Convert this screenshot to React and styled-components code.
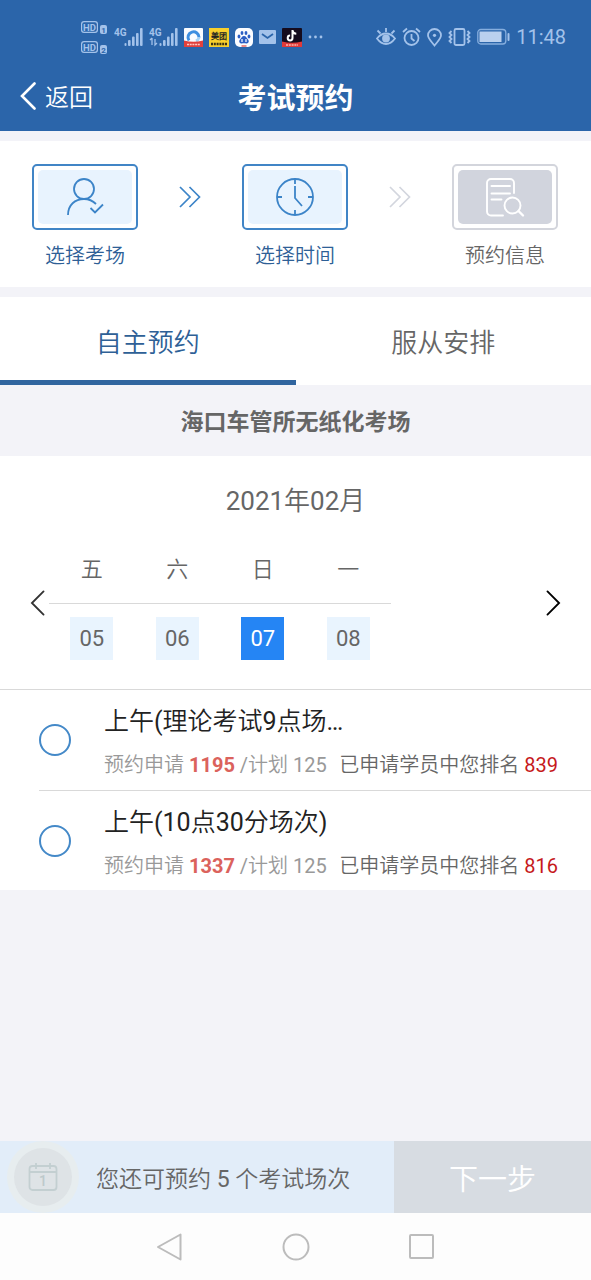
import React, { useState } from 'react';
import styled, { createGlobalStyle } from 'styled-components';

const steps = [
    { id: 1, label: '选择考场', icon: 'person', active: true },
    { id: 2, label: '选择时间', icon: 'clock', active: true },
    { id: 3, label: '预约信息', icon: 'info', active: false },
];

const days = [
    { week: '五', day: '05' },
    { week: '六', day: '06' },
    { week: '日', day: '07' },
    { week: '一', day: '08' },
];

const sessions = [
    { id: 'a', title: '上午(理论考试9点场…', applied: 1195, plan: 125, rank: 839 },
    { id: 'b', title: '上午(10点30分场次)', applied: 1337, plan: 125, rank: 816 },
];

const HdBadge = ({ n }) => (
    <svg width="27" height="13" viewBox="0 0 27 13">
        <rect x="0" y="0" width="17" height="12" rx="3" fill="#a3c2ea" />
        <rect x="1.2" y="1.2" width="14.6" height="9.6" rx="2" fill="#2b65aa" />
        <text x="8.5" y="9.5" fontSize="9.5" fontWeight="700" textAnchor="middle" fill="#a3c2ea">HD</text>
        <rect x="19" y="4" width="7" height="9" rx="2" fill="#a3c2ea" />
        <text x="22.5" y="12" fontSize="8" fontWeight="700" textAnchor="middle" fill="#2b65aa">{ n }</text>
    </svg>
);

const Signal = ({ data }) => (
    <svg width="29" height="22" viewBox="0 0 29 22" fill="#a3c2ea">
        <text x="0" y="10" fontSize="10" fontWeight="700">4G</text>
        { data && <path d="M3 12v7M1 14l2-2M6 13v6l2-2" fill="none" stroke="#a3c2ea" strokeWidth="1.3" /> }
        <rect x="10.5" y="17" width="2" height="3" rx="1" />
        <rect x="14" y="14" width="2.6" height="6" rx="1" />
        <rect x="18" y="10.5" width="2.6" height="9.5" rx="1" />
        <rect x="22" y="7" width="2.6" height="13" rx="1" />
        <rect x="26" y="2" width="2.6" height="18" rx="1" />
    </svg>
);

const BrowserApp = () => (
    <svg width="19" height="19" viewBox="0 0 19 19">
        <rect width="19" height="19" rx="1" fill="#fafcff" />
        <path d="M5 12.5A5.5 5.5 0 1 1 15 9.5" fill="none" stroke="#3f8fe0" strokeWidth="3" />
        <path d="M15 9.5A5 5 0 0 1 12 13" fill="none" stroke="#a9d4f5" strokeWidth="3" />
        <path d="M0 12.5Q9.5 15 19 12.5V19H0z" fill="#e2403c" />
        <path d="M3 16.5h13" stroke="#ffc9c4" strokeWidth="1.6" strokeDasharray="2 .7" />
    </svg>
);

const MeituanApp = () => (
    <svg width="20" height="19" viewBox="0 0 20 19">
        <rect width="20" height="19" fill="#f8cf2c" />
        <text x="10" y="11" fontSize="8" fontWeight="700" textAnchor="middle" fill="#222">美团</text>
        <path d="M2 16h16" stroke="#3a3214" strokeWidth="2.4" strokeDasharray="2 .8" />
    </svg>
);

const BaiduApp = () => (
    <svg width="18" height="19" viewBox="0 0 18 19">
        <rect width="18" height="19" rx="5" fill="#fbfcff" />
        <g fill="#2d5fc4">
            <ellipse cx="4" cy="8.5" rx="1.4" ry="2" />
            <ellipse cx="7" cy="5" rx="1.4" ry="2" />
            <ellipse cx="11" cy="5" rx="1.4" ry="2" />
            <ellipse cx="14" cy="8.5" rx="1.4" ry="2" />
            <path d="M9 8c2.2 0 2.5 2 4 3.4 1.4 1.4.8 3.8-1.3 4-1 .1-1.7-.2-2.7-.2s-1.7.3-2.7.2c-2.1-.2-2.7-2.6-1.3-4C6.5 10 6.8 8 9 8z" />
        </g>
        <path d="M7 11v3M11 11v3" stroke="#fff" strokeWidth="1.2" />
        <path d="M6.5 18h5" stroke="#e2403c" strokeWidth="1.2" />
    </svg>
);

const MailIcon = () => (
    <svg width="17" height="14" viewBox="0 0 17 14">
        <rect width="17" height="14" rx="1" fill="#a3c2ea" />
        <path d="M3 4l5.5 4L14 4" fill="none" stroke="#2b65aa" strokeWidth="1.8" />
    </svg>
);

const TiktokApp = () => (
    <svg width="20" height="19" viewBox="0 0 20 19">
        <rect width="20" height="19" rx="1" fill="#150b1d" />
        <path d="M10.5 2v8a2.4 2.4 0 1 1-2.4-2.4M10.5 2.5c.3 2 1.7 3.1 3.8 3.2" fill="none" stroke="#fff" strokeWidth="2" />
        <path d="M0 13.5Q10 16 20 13.5V19H0z" fill="#df3a3a" />
        <path d="M4 17h12" stroke="#ffb8b0" strokeWidth="1.5" strokeDasharray="2 .8" />
    </svg>
);

const DotsIcon = () => (
    <svg width="15" height="4" viewBox="0 0 15 4" fill="#a3c2ea">
        <circle cx="2" cy="2" r="1.4" />
        <circle cx="7.5" cy="2" r="1.4" />
        <circle cx="13" cy="2" r="1.4" />
    </svg>
);

const EyeIcon = () => (
    <svg width="20" height="20" viewBox="0 0 20 20" fill="none" stroke="#a3c2ea" strokeWidth="1.8">
        <path d="M1 11.5Q5 6.5 10 6.5t9 5Q15 17 10 17t-9-5.5zM10 5V1M4.5 6.5l-3-3M15.5 6.5l3-3" />
        <circle cx="10" cy="11.5" r="3" fill="#a3c2ea" />
    </svg>
);

const AlarmIcon = () => (
    <svg width="19" height="20" viewBox="0 0 19 20" fill="none" stroke="#a3c2ea" strokeWidth="1.8">
        <circle cx="9.5" cy="11" r="7" />
        <path d="M9.5 7v4.5l3 2.5M1 5l4-3.5M18 5l-4-3.5" />
    </svg>
);

const PinIcon = () => (
    <svg width="15" height="19" viewBox="0 0 15 19" fill="none" stroke="#a3c2ea" strokeWidth="1.8">
        <path d="M7.5 17.5C4 13 1 10.5 1 7.3a6.5 6.3 0 0 1 13 0c0 3.2-3 5.7-6.5 10.2z" />
        <circle cx="7.5" cy="7.3" r="1.6" fill="#a3c2ea" stroke="none" />
    </svg>
);

const VibrateIcon = () => (
    <svg width="23" height="20" viewBox="0 0 23 20" fill="none" stroke="#a3c2ea" strokeWidth="1.8">
        <rect x="6.5" y="2" width="10" height="16" rx="1.5" />
        <path d="M3.5 4l-2 2 2 2-2 2 2 2-2 2 2 2M19.5 4l2 2-2 2 2 2-2 2 2 2-2 2" />
    </svg>
);

const BatteryIcon = () => (
    <svg width="33" height="18" viewBox="0 0 33 18">
        <rect x=".8" y="1.5" width="28" height="14.5" rx="3" fill="none" stroke="#86aede" strokeWidth="1.3" />
        <rect x="2.5" y="3.5" width="22" height="10.5" fill="#bad0ee" />
        <rect x="30.5" y="5" width="2" height="8" rx="1" fill="#a3c2ea" />
    </svg>
);

const PersonIcon = () => (
    <svg width="44" height="42" viewBox="0 0 44 42" fill="none" stroke="#3c84c8" strokeWidth="1.8">
        <circle cx="21" cy="13" r="10" />
        <path d="M5 39c0-10 7-16 16-16 5 0 9 2 12 5M27.5 32l4.5 4.5 8-8" />
    </svg>
);

const ClockIcon = () => (
    <svg width="42" height="42" viewBox="0 0 42 42" fill="none" stroke="#3c84c8" strokeWidth="1.8">
        <circle cx="21" cy="21" r="18" />
        <path d="M21 3v5M21 39v-5M3 21h5M39 21h-5M21 10v12l7 8" />
    </svg>
);

const InfoIcon = () => (
    <svg width="42" height="42" viewBox="1 0 42 42" fill="none" stroke="#fff" strokeWidth="1.9" strokeLinecap="round">
        <path d="M20 39.5H8a4 4 0 0 1-4-4V7a4 4 0 0 1 4-4h19a4 4 0 0 1 4 4v10M8.5 10h18.5M8.5 17.5h18.5M8.5 23.5h10" />
        <circle cx="29.5" cy="29.5" r="8" />
        <path d="M35.5 35l4.5 4.5" strokeWidth="2.4" />
    </svg>
);

const DoubleChevron = ({ color }) => (
    <svg width="22" height="22" viewBox="0 0 22 22" fill="none" stroke={ color } strokeWidth="1.7">
        <path d="M1 1l10 10L1 21M10.5 1l10 10-10 10" />
    </svg>
);

const Chevron = ({ left, width, height, stroke }) => (
    <svg width={ width } height={ height } viewBox="0 0 16 28" fill="none" stroke="currentColor" strokeWidth={ stroke } strokeLinecap="round">
        <path d={ left ? 'M14.5 1.5L2 14l12.5 12.5' : 'M1.5 1.5L14 14 1.5 26.5' } />
    </svg>
);

const CalendarIcon = () => (
    <svg width="30" height="30" viewBox="0 0 30 30" fill="none" stroke="#c3cfd1" strokeWidth="1.8">
        <rect x="1.5" y="4" width="27" height="24" rx="3" />
        <path d="M1.5 10h27M8 1v6M22 1v6" />
        <text x="15" y="24" fontSize="14" fontWeight="500" textAnchor="middle" fill="#bdc9cb" stroke="none">1</text>
    </svg>
);

const stepIcons = { person: <PersonIcon />, clock: <ClockIcon />, info: <InfoIcon /> };

const App = () => {
    const [ tab, setTab ] = useState('self');
    const [ day, setDay ] = useState('07');

    return (
        <Page>
            <GlobalStyle />
            <StatusBar>
                <StatusLeft>
                    <HdStack>
                        <HdBadge n="1" />
                        <HdBadge n="2" />
                    </HdStack>
                    <Signal />
                    <Signal data />
                    <BrowserApp />
                    <MeituanApp />
                    <BaiduApp />
                    <MailIcon />
                    <TiktokApp />
                    <DotsIcon />
                </StatusLeft>
                <StatusRight>
                    <EyeIcon />
                    <AlarmIcon />
                    <PinIcon />
                    <VibrateIcon />
                    <BatteryIcon />
                    <Time>11:48</Time>
                </StatusRight>
            </StatusBar>

            <Header>
                <Back>
                    <Chevron left width={ 16 } height={ 28 } stroke={ 2.6 } />
                    返回
                </Back>
                <Title>考试预约</Title>
            </Header>

            <Steps>
                { steps.map((step, i) => (
                    <React.Fragment key={ step.id }>
                        { i > 0 && (
                            <Arrow>
                                <DoubleChevron color={ step.active ? '#3c84c8' : '#d3d6de' } />
                            </Arrow>
                        ) }
                        <Step>
                            <StepBox $active={ step.active }>
                                <StepFill $active={ step.active }>{ stepIcons[step.icon] }</StepFill>
                            </StepBox>
                            <StepLabel $active={ step.active }>{ step.label }</StepLabel>
                        </Step>
                    </React.Fragment>
                )) }
            </Steps>

            <Tabs>
                <Tab $active={ tab === 'self' } onClick={ () => setTab('self') }>自主预约</Tab>
                <Tab $active={ tab === 'assign' } onClick={ () => setTab('assign') }>服从安排</Tab>
            </Tabs>

            <Venue>海口车管所无纸化考场</Venue>

            <Calendar>
                <Month>2021年02月</Month>
                <Week>
                    <Nav aria-label="上一周">
                        <Chevron left width={ 15 } height={ 26 } stroke={ 2 } />
                    </Nav>
                    <Days>
                        { days.map((d) => (
                            <Day key={ d.day }>
                                <WeekName>{ d.week }</WeekName>
                                <DateCell>
                                    <DateButton $active={ day === d.day } onClick={ () => setDay(d.day) }>
                                        { d.day }
                                    </DateButton>
                                </DateCell>
                            </Day>
                        )) }
                    </Days>
                    <Nav $dark aria-label="下一周">
                        <Chevron width={ 15 } height={ 26 } stroke={ 2 } />
                    </Nav>
                </Week>
            </Calendar>

            <Sessions>
                { sessions.map((s) => (
                    <Session key={ s.id }>
                        <Radio type="radio" name="session" value={ s.id } />
                        <Info>
                            <SessionTitle>{ s.title }</SessionTitle>
                            <Meta>
                                <Count>预约申请 <Applied>{ s.applied }</Applied> /计划 { s.plan }</Count>
                                <span>已申请学员中您排名 <Rank>{ s.rank }</Rank></span>
                            </Meta>
                        </Info>
                    </Session>
                )) }
            </Sessions>

            <Footer>
                <Remain>
                    <Badge><CalendarIcon /></Badge>
                    您还可预约 5 个考试场次
                </Remain>
                <Next>下一步</Next>
            </Footer>

            <SystemNav>
                <SystemButton aria-label="后退">
                    <svg width="26" height="28" viewBox="0 0 26 28" fill="none" stroke="#bcbcbc" strokeWidth="2" strokeLinejoin="round">
                        <path d="M23.5 1.5v25L1 14z" />
                    </svg>
                </SystemButton>
                <SystemButton aria-label="主页">
                    <svg width="28" height="28" viewBox="0 0 28 28" fill="none" stroke="#bcbcbc" strokeWidth="2">
                        <circle cx="14" cy="14" r="12.5" />
                    </svg>
                </SystemButton>
                <SystemButton aria-label="最近任务">
                    <svg width="26" height="26" viewBox="0 0 26 26" fill="none" stroke="#bcbcbc" strokeWidth="2">
                        <rect x="1" y="1" width="23" height="23" rx="1" />
                    </svg>
                </SystemButton>
            </SystemNav>
        </Page>
    );
};

export default App;

const boldFont = 'Roboto, "Noto Sans CJK SC", sans-serif';

const GlobalStyle = createGlobalStyle`
    * {
        box-sizing: border-box;
    }
    body {
        margin: 0;
        font-family: Roboto, "Noto Sans CJK SC DemiLight", "Noto Sans CJK SC", sans-serif;
        color: #666;
    }
    button {
        font-family: inherit;
        border: 0;
        padding: 0;
        background: none;
        color: inherit;
        cursor: pointer;
    }
    svg {
        display: block;
        flex-shrink: 0;
    }
`;

const Page = styled.div`
    min-height: 100vh;
    display: flex;
    flex-direction: column;
    background-color: #f3f3f8;
`;

const StatusBar = styled.div`
    height: 62px;
    display: flex;
    align-items: center;
    justify-content: space-between;
    padding: 12px 25px 0 81px;
    background-color: #2b65aa;
`;
const StatusLeft = styled.div`
    display: flex;
    align-items: center;
    gap: 6px;
`;
const HdStack = styled.div`
    display: flex;
    flex-direction: column;
    gap: 7px;
`;
const StatusRight = styled.div`
    display: flex;
    align-items: center;
    gap: 6px;
`;
const Time = styled.span`
    font-size: 20px;
    color: #a3c2ea;
`;

const Header = styled.header`
    height: 69px;
    display: grid;
    grid-template-columns: 1fr auto 1fr;
    align-items: center;
    padding: 0 20px 2px;
    background-color: #2b65aa;
    color: #fff;
`;
const Back = styled.button`
    display: flex;
    align-items: center;
    gap: 9px;
    font-size: 24px;
`;
const Title = styled.h1`
    margin: 0;
    font-family: ${boldFont};
    font-size: 29px;
    font-weight: 700;
`;

const Steps = styled.section`
    display: flex;
    justify-content: space-between;
    margin: 10px 0;
    padding: 23px 33px 16px 32px;
    background-color: #fff;
`;
const Step = styled.div`
    display: flex;
    flex-direction: column;
    align-items: center;
    gap: 11px;
`;
const StepBox = styled.div`
    width: 106px;
    height: 66px;
    display: flex;
    padding: 4px;
    border: 2px solid ${({ $active }) => ($active ? '#4185c6' : '#d3d5dc')};
    border-radius: 5px;
`;
const StepFill = styled.div`
    flex: 1;
    display: flex;
    align-items: center;
    justify-content: center;
    border-radius: 5px;
    background-color: ${({ $active }) => ($active ? '#e8f3fe' : '#d1d4dd')};
`;
const StepLabel = styled.span`
    font-size: 20px;
    line-height: 30px;
    color: ${({ $active }) => ($active ? '#2e6096' : '#666')};
`;
const Arrow = styled.div`
    height: 66px;
    display: flex;
    align-items: center;
`;

const Tabs = styled.nav`
    display: flex;
    background-color: #fff;
`;
const Tab = styled.button`
    flex: 1;
    height: 88px;
    padding-top: 4px;
    font-size: 26px;
    border-bottom: 5px solid ${({ $active }) => ($active ? '#30659f' : 'transparent')};
    color: ${({ $active }) => ($active ? '#2e6096' : '#666')};
`;

const Venue = styled.h2`
    margin: 0;
    padding-top: 4px;
    font-family: ${boldFont};
    font-size: 23px;
    line-height: 67px;
    font-weight: 700;
    text-align: center;
`;

const Calendar = styled.section`
    padding: 25px 30px 29px;
    background-color: #fff;
    border-bottom: 1px solid #d9d9d9;
`;
const Month = styled.div`
    font-size: 26px;
    line-height: 40px;
    text-align: center;
`;
const Week = styled.div`
    display: flex;
    align-items: center;
    gap: 4px;
    margin-top: 24px;
`;
const Nav = styled.button`
    color: ${({ $dark }) => ($dark ? '#000' : '#333')};
`;
const Days = styled.div`
    width: 342px;
    display: flex;
    margin-right: auto;
`;
const Day = styled.div`
    flex: 1;
`;
const WeekName = styled.div`
    height: 59px;
    font-size: 22px;
    line-height: 50px;
    text-align: center;
    border-bottom: 1px solid #d9d9d9;
`;
const DateCell = styled.div`
    display: flex;
    justify-content: center;
    padding-top: 13px;
`;
const DateButton = styled.button`
    width: 43px;
    height: 43px;
    font-size: 22px;
    background-color: ${({ $active }) => ($active ? '#2585f4' : '#e9f4fe')};
    color: ${({ $active }) => ($active ? '#fff' : '#666')};
`;

const Sessions = styled.section`
    padding-left: 39px;
    background-color: #fff;
`;
const Session = styled.label`
    height: 100px;
    display: flex;
    align-items: center;
    gap: 33px;
    padding-right: 33px;
    cursor: pointer;

    & + & {
        border-top: 1px solid #d9d9d9;
    }
`;
const Radio = styled.input`
    appearance: none;
    flex-shrink: 0;
    width: 32px;
    height: 32px;
    margin: 0;
    border: 2px solid #4489c8;
    border-radius: 50%;

    &:checked {
        background-color: #4489c8;
    }
`;
const Info = styled.div`
    flex: 1;
    min-width: 0;
    padding-top: 4px;
`;
const SessionTitle = styled.div`
    font-size: 25px;
    line-height: 46px;
    color: #222;
`;
const Meta = styled.div`
    display: flex;
    justify-content: space-between;
    font-size: 20px;
    line-height: 40px;
    white-space: nowrap;
`;
const Count = styled.span`
    color: #999;
`;
const Applied = styled.b`
    font-weight: 700;
    color: #db625c;
`;
const Rank = styled.span`
    color: #c6191c;
`;

const Footer = styled.footer`
    height: 72px;
    display: grid;
    grid-template-columns: 2fr 1fr;
    margin-top: auto;
`;
const Remain = styled.div`
    display: flex;
    align-items: center;
    gap: 24px;
    padding-left: 14px;
    font-size: 23px;
    background-color: #e2edf9;
`;
const Badge = styled.div`
    width: 58px;
    height: 58px;
    display: flex;
    align-items: center;
    justify-content: center;
    border-radius: 50%;
    background-color: #dee3e6;
    box-shadow: 0 0 0 7px #e7edef;
`;
const Next = styled.button`
    font-size: 29px;
    background-color: #d7dce2;
    color: #fff;
`;

const SystemNav = styled.div`
    height: 67px;
    display: flex;
    align-items: center;
    justify-content: center;
    gap: 98px;
    background-color: #fdfdfd;
`;
const SystemButton = styled.button`
    width: 28px;
    display: flex;
    justify-content: center;
`;
